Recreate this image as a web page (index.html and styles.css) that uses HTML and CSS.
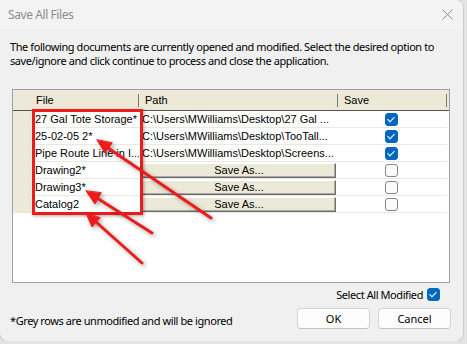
FILE: index.html
```html
<!DOCTYPE html>
<html lang="en">
<head>
    <meta charset="UTF-8">
    <title>Save All Files</title>
    <link rel="stylesheet" href="styles.css">
</head>
<body>
    <div class="window">
        <div class="titlebar">
            <span class="title">Save All Files</span>
            <svg class="close" width="11" height="11" viewBox="0 0 11 11">
                <path d="M0.5 0.5 L10.5 10.5 M10.5 0.5 L0.5 10.5" stroke="#8a8a8a" stroke-width="1"/>
            </svg>
        </div>

        <div class="content">
            <p class="intro">The following documents are currently opened and modified. Select the desired option to<br>save/ignore and click continue to process and close the application.</p>

            <div class="grid">
                <div class="grid-head">
                    <div class="corner"></div>
                    <div class="hcell">File</div>
                    <div class="hcell">Path</div>
                    <div class="hcell">Save</div>
                </div>

                <div class="grid-row">
                    <div class="rowhead"></div>
                    <div class="cell">27 Gal Tote Storage*</div>
                    <div class="cell path">C:\Users\MWilliams\Desktop\27 Gal ...</div>
                    <div class="cell check"><span class="cb on"></span></div>
                </div>
                <div class="grid-row">
                    <div class="rowhead"></div>
                    <div class="cell">25-02-05 2*</div>
                    <div class="cell path">C:\Users\MWilliams\Desktop\TooTall...</div>
                    <div class="cell check"><span class="cb on"></span></div>
                </div>
                <div class="grid-row">
                    <div class="rowhead"></div>
                    <div class="cell">Pipe Route Line in I...</div>
                    <div class="cell path">C:\Users\MWilliams\Desktop\Screens...</div>
                    <div class="cell check"><span class="cb on"></span></div>
                </div>
                <div class="grid-row">
                    <div class="rowhead"></div>
                    <div class="cell">Drawing2*</div>
                    <div class="cell path"><span class="saveas">Save As...</span></div>
                    <div class="cell check"><span class="cb"></span></div>
                </div>
                <div class="grid-row">
                    <div class="rowhead"></div>
                    <div class="cell">Drawing3*</div>
                    <div class="cell path"><span class="saveas">Save As...</span></div>
                    <div class="cell check"><span class="cb"></span></div>
                </div>
                <div class="grid-row">
                    <div class="rowhead"></div>
                    <div class="cell">Catalog2</div>
                    <div class="cell path"><span class="saveas">Save As...</span></div>
                    <div class="cell check"><span class="cb"></span></div>
                </div>
            </div>

            <div class="select-all">
                <span>Select All Modified</span>
                <span class="cb on"></span>
            </div>

            <div class="footer">
                <span class="note">*Grey rows are unmodified and will be ignored</span>
                <div class="buttons">
                    <button class="btn">OK</button>
                    <button class="btn">Cancel</button>
                </div>
            </div>
        </div>

        <!-- annotation drawn over the dialog -->
        <div class="redbox"></div>
        <svg class="arrows" width="463" height="341" viewBox="0 0 463 341">
            <g stroke="#ec1c1c" stroke-width="3" stroke-linecap="round" fill="#ec1c1c">
                <line x1="211" y1="218" x2="108" y2="148"/>
                <polygon points="97,140 105,153 112,143" stroke-width="1"/>
                <line x1="152" y1="233" x2="97" y2="198"/>
                <polygon points="86,191 95,204 101,193" stroke-width="1"/>
                <line x1="142" y1="263" x2="96" y2="222"/>
                <polygon points="86,213 92,227 100,218" stroke-width="1"/>
            </g>
        </svg>
    </div>
</body>
</html>
```

FILE: styles.css
```css
body {
    margin: 0;
    background: #e4e4e4;
    font-family: "Noto Sans", sans-serif;
    letter-spacing: -0.42px;
}
.window {
    position: relative;
    width: 463px;
    height: 341px;
    background: #f0f0f0;
    border-radius: 0 8px 8px 8px;
    box-shadow: 0 0 0 1px #cdcdcd;
    overflow: hidden;
}
.titlebar {
    height: 29px;
    background: #f3f3f3;
    display: flex;
    align-items: center;
    justify-content: space-between;
    padding: 0 10px 0 8px;
    font-size: 12px;
    color: #8c8c8c;
}
.content {
    padding: 11px 14px 0 10px;
}
.intro {
    margin: 0;
    font-size: 11px;
    line-height: 14px;
    white-space: nowrap;
    color: #000;
}

/* data grid */
.grid {
    margin: 21px 0 0 2px;
    width: 438px;
    height: 194px;
    box-sizing: border-box;
    border: 1px solid #a0a0a0;
    background: #fff;
    font-family: "Liberation Sans", Arial, sans-serif;
    font-size: 11px;
    letter-spacing: 0;
    color: #000;
}
.grid-head, .grid-row {
    display: grid;
    grid-template-columns: 18px 108px 199px 109px;
}
.grid-head {
    height: 20px;
    background: #ece9d8;
    border-bottom: 1px solid #555;
}
.hcell {
    position: relative;
    line-height: 20px;
    padding-left: 5px;
}
.hcell + .hcell {
    padding-left: 6px;
}
.hcell::after {
    content: "";
    position: absolute;
    right: 0;
    top: 4px;
    height: 13px;
    width: 1px;
    background: #7a7a7a;
}
.grid-row {
    height: 17px;
}
.rowhead {
    background: #ece9d8;
}
.cell {
    border-bottom: 1px solid #ebe9df;
    line-height: 16px;
    padding-left: 4px;
    white-space: nowrap;
    overflow: hidden;
}
.cell.path {
    padding-left: 3px;
}
.saveas {
    display: block;
    margin: 1px 2px 0 0;
    height: 13px;
    line-height: 13px;
    text-align: center;
    background: #ece9d8;
    border-top: 1px solid #fff;
    border-left: 1px solid #fff;
    border-right: 1px solid #6d6d6d;
    border-bottom: 1px solid #6d6d6d;
    box-shadow: inset -1px -1px #a9a8a2;
}
.cell.check {
    display: flex;
    justify-content: center;
    align-items: center;
    padding-left: 0;
    padding-right: 2px;
}

/* checkboxes */
.cb {
    position: relative;
    display: inline-block;
    width: 13px;
    height: 13px;
    box-sizing: border-box;
    border: 1px solid #858585;
    border-radius: 3px;
    background: #fbfbfb;
}
.cb.on {
    background: #0067c0;
    border-color: #0067c0;
}
.cb.on::after {
    content: "";
    position: absolute;
    left: 3px;
    top: 1px;
    width: 3px;
    height: 6px;
    border-right: 1px solid #fff;
    border-bottom: 1px solid #fff;
    transform: rotate(45deg);
}

.select-all {
    display: flex;
    justify-content: flex-end;
    align-items: center;
    gap: 4px;
    margin-top: 5px;
    padding-right: 9px;
    height: 13px;
    font-size: 11px;
}
.footer {
    display: flex;
    justify-content: space-between;
    align-items: center;
    margin-top: 7px;
    margin-right: -2px;
    font-size: 11px;
}
.note {
    padding-top: 3px;
}
.buttons {
    display: flex;
    gap: 8px;
}
.btn {
    width: 73px;
    height: 21px;
    font-family: "Noto Sans", sans-serif;
    font-size: 11px;
    color: #000;
    background: #fdfdfd;
    border: 1px solid #d4d4d4;
    border-bottom-color: #c2c2c2;
    border-radius: 4px;
    padding: 0;
}

/* annotation overlay */
.redbox {
    position: absolute;
    left: 32px;
    top: 109px;
    width: 111px;
    height: 106px;
    box-sizing: border-box;
    border: 3px solid #ec1c1c;
    box-shadow: 1px 1px 3px rgba(0,0,0,0.35);
}
.arrows {
    position: absolute;
    left: 0;
    top: 0;
    filter: drop-shadow(2px 2px 2px rgba(0,0,0,0.35));
}
```
